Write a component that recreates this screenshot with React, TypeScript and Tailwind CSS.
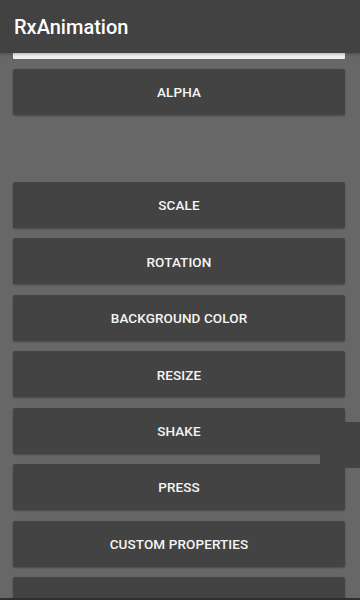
import React from "react";

const labels = ["ALPHA", "", "SCALE", "ROTATION", "BACKGROUND COLOR", "RESIZE", "SHAKE", "PRESS", "CUSTOM PROPERTIES", ""];

export default function App() {
  return (
    <div
      className="relative w-[360px] h-[600px] overflow-hidden bg-[#676767]"
      style={{ fontFamily: "Roboto, 'Noto Sans', sans-serif" }}
    >
      <div className="relative z-10 h-[53px] bg-[#424242] flex items-center pl-[14px] text-white text-[20px] font-medium shadow-[0_1px_3px_rgba(0,0,0,0.25)]">
        RxAnimation
      </div>
      <div className="ml-[13px] mr-[15px] h-[6px] bg-[#eeeeee] rounded-b-[1px]" />
      <div className="flex flex-col gap-[10.45px] pt-[10px] pl-[13px] pr-[15px]">
        {labels.map((l, i) => (
          <div
            key={i}
            className={
              i === 1
                ? "h-[46px] shrink-0"
                : "h-[46px] shrink-0 rounded-[2px] bg-[#434343] shadow-[0_1px_2px_rgba(0,0,0,0.3)] flex items-center justify-center pt-[1px] text-[#f5f5f5] text-[13.5px] font-medium tracking-[0.1px]"
            }
          >
            {l}
          </div>
        ))}
      </div>
      <div className="absolute left-[320px] top-[422px] w-[40px] h-[46px] bg-[#434343]" />
      <div className="absolute left-0 right-0 bottom-0 h-[2px] bg-[#2f2f2f]" />
    </div>
  );
}
